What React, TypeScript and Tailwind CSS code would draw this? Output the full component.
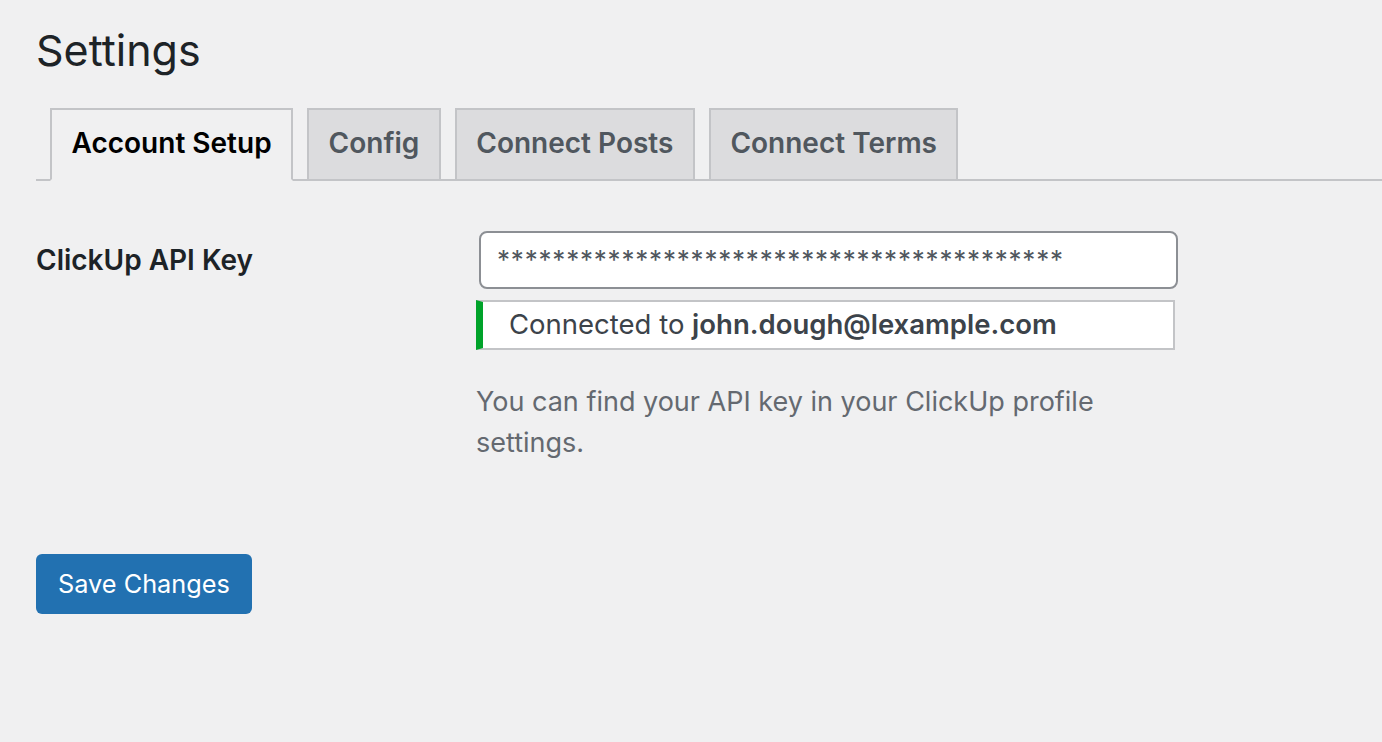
import React from "react";

const tabs = [
  { name: "Account Setup", active: true },
  { name: "Config", active: false },
  { name: "Connect Posts", active: false },
  { name: "Connect Terms", active: false },
];

const App = () => {
  return (
    <div
      className="min-h-[742px] bg-[#f0f0f1] pl-[36px] pt-[17px] text-[#3c434a]"
      style={{ fontFamily: "Inter, 'Noto Sans', sans-serif" }}
    >
      {/* Page title */}
      <h1 className="text-[43px] leading-[66px] font-normal text-[#1d2327]">Settings</h1>

      {/* Tabs */}
      <nav className="mt-[25px] flex border-b-2 border-[#c3c4c7] pl-[14px]">
        {tabs.map((tab) => (
          <a
            key={tab.name}
            href="#"
            className={
              tab.active
                ? "-mb-[2px] mr-[14px] border-2 border-[#c3c4c7] border-b-[#f0f0f1] bg-[#f0f0f1] px-[19.5px] pt-[9px] pb-[11px] text-[28px] leading-[49px] font-semibold text-black"
                : "mr-[14px] border-2 border-b-0 border-[#c3c4c7] bg-[#dcdcde] px-[19.5px] pt-[9px] pb-[9px] text-[28px] leading-[49px] font-semibold text-[#50575e]"
            }
          >
            {tab.name}
          </a>
        ))}
      </nav>

      {/* Form */}
      <div className="mt-[50px] flex">
        <div className="w-[440px] pt-[11px] text-[28px] leading-[36px] font-semibold text-[#1d2327]">
          ClickUp API Key
        </div>
        <div className="flex flex-col">
          <div className="ml-[3px] flex h-[58px] w-[699px] items-start rounded-[8px] border-2 border-[#8c8f94] bg-white px-[16px] pt-[9px] text-[26px] leading-[36px] tracking-[0.8px] text-[#50575e]">
            *****************************************
          </div>
          <div className="mt-[11px] flex h-[50px] w-[699px] items-center border-2 border-l-[7px] border-[#c3c4c7] border-l-[#00a32a] bg-white pl-[26px] text-[27.5px] text-[#3c434a]">
            Connected to&nbsp;<strong className="font-semibold">john.dough@lexample.com</strong>
          </div>
          <p className="mt-[31px] w-[660px] text-[27px] leading-[41px] text-[#646970]">
            You can find your API key in your ClickUp profile settings.
          </p>
        </div>
      </div>

      {/* Submit */}
      <button className="mt-[91px] h-[60px] rounded-[6px] bg-[#2271b1] px-[22px] text-[25.3px] text-white">
        Save Changes
      </button>
    </div>
  );
};

export default App;
